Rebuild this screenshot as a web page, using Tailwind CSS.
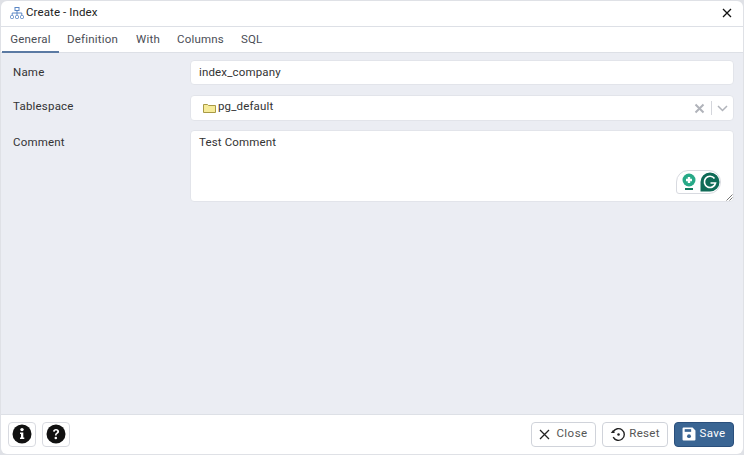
<!DOCTYPE html>
<html lang="en">
<head>
<meta charset="UTF-8" />
<title>Create - Index</title>
<script src="https://cdn.jsdelivr.net/npm/@tailwindcss/browser@4"></script>
</head>
<body class="bg-[#dfe1e6] w-[744px] h-[455px] overflow-hidden font-['Roboto',sans-serif] text-[11.5px] text-[#222]">

<div class="w-[742px] h-[453px] ml-px mt-px flex flex-col bg-white rounded-md overflow-hidden">
  <!-- title bar -->
  <div class="h-[26px] shrink-0 flex items-center pl-[9px] pr-[11px] pb-px border-b border-[#dde0e6]">
    <svg width="14" height="12" viewBox="0 0 14 12" fill="none" stroke="#5b86c4" stroke-width="1" class="mr-[2px]">
      <rect x="5" y="0.5" width="4" height="3" />
      <path d="M7 3.5V6M2.2 8V6H11.8V8M7 6V8" />
      <rect x="0.5" y="8.5" width="3" height="3" rx="1" />
      <rect x="5.500" y="8.500" width="3" height="3" rx="1" />
      <rect x="10.500" y="8.500" width="3" height="3" rx="1" />
    </svg>
    <span class="text-[#222] tracking-[0.1px]">Create - Index</span>
    <svg width="10" height="10" viewBox="0 0 10 10" class="ml-auto" stroke="#111" stroke-width="1.300" fill="none"><path d="M1 1L9 9M9 1L1 9" /></svg>
  </div>

  <!-- tabs -->
  <div class="h-[26px] shrink-0 flex pl-px border-b border-[#dde0e6] text-[#4a4d55] tracking-[0.2px]">
    <div class="w-[57px] text-center leading-[24px] border-b-2 border-[#5b7aa3] h-[26px]">General</div>
    <div class="ml-2 leading-[24px]">Definition</div>
    <div class="ml-[18px] leading-[24px]">With</div>
    <div class="ml-[17px] leading-[24px]">Columns</div>
    <div class="ml-[17px] leading-[24px]">SQL</div>
  </div>

  <!-- form -->
  <div class="flex-1 bg-[#ebedf3] pt-[7px] pl-3 pr-[9px] text-[#333]">
    <div class="flex mb-[10px]">
      <label class="w-[177px] leading-[25px] tracking-[0.2px]">Name</label>
      <div class="flex-1 h-[25px] bg-white rounded border border-[#e2e4ea] px-[8px] leading-[23px] tracking-[0.15px]">index_company</div>
    </div>
    <div class="flex mb-[9px]">
      <label class="w-[177px] leading-[22px] tracking-[0.2px]">Tablespace</label>
      <div class="flex-1 h-[26px] bg-white rounded border border-[#e2e4ea] pl-3 pr-[4px] flex items-center tracking-[0.15px]">
        <svg width="13" height="11" viewBox="0 0 13 11" class="mr-[3px]"><path d="M0.500 9.500V1.500H4.500L5.500 2.500H12.500V9.500Z" fill="#f6eb9a" stroke="#a89a45" stroke-width="1" /></svg>
        <span class="-ml-px -mt-[2px]">pg_default</span>
        <svg width="11" height="11" viewBox="0 0 11 11" class="ml-auto" stroke="#b0b3ba" stroke-width="2" fill="none"><path d="M1.500 1.500L9.500 9.500M9.500 1.500L1.500 9.500" /></svg>
        <span class="w-px h-[14px] bg-[#d4d6dc] ml-[6px] mr-[5px]"></span>
        <svg width="11" height="7" viewBox="0 0 11 7" stroke="#b0b3ba" stroke-width="1.500" fill="none" class="mr-[1px]"><path d="M1 1L5.500 5.500L10 1" /></svg>
      </div>
    </div>
    <div class="flex">
      <label class="w-[177px] leading-[25px] tracking-[0.2px]">Comment</label>
      <div class="relative flex-1 h-[72px] bg-white rounded border border-[#e2e4ea] px-[8px] pt-[3px] tracking-[0.15px]">
        Test Comment
        <div class="absolute right-[12px] bottom-[7px] w-[45px] h-[24px] rounded-[12px] rounded-bl-[3px] bg-white border border-[#d8dae0] flex items-center pl-[5px] gap-[4px]">
          <svg width="14" height="18" viewBox="0 0 14 18">
            <circle cx="7" cy="7" r="6.500" fill="#27a987" />
            <path d="M7 4V10M4 7H10" stroke="#fff" stroke-width="2.400" />
            <rect x="3" y="15" width="8" height="2" fill="#127a5f" />
          </svg>
          <svg width="20" height="20" viewBox="0 0 20 20">
            <path d="M10 0.500A9.500 9.500 0 1 1 10 19.500H0.500V10A9.500 9.500 0 0 1 10 0.500Z" fill="#0f6b57" />
            <path d="M14.500 6.500A5.600 5.600 0 1 0 15.500 11H10.500" fill="none" stroke="#fff" stroke-width="1.700" />
          </svg>
        </div>
        <svg width="7" height="7" viewBox="0 0 7 7" class="absolute right-0 bottom-0" stroke="#777" stroke-width="1" fill="none"><path d="M0.500 6.500L6.500 0.500M3.500 6.500L6.500 3.500" /></svg>
      </div>
    </div>
  </div>

  <!-- footer -->
  <div class="h-[40px] shrink-0 flex items-center pb-px border-t border-[#dde0e6] pl-[7px] pr-[9px] tracking-[0.3px]">
    <button class="w-[28px] h-[25px] flex items-center justify-center rounded border border-[#d8dae0] mr-[6px]">
      <svg width="20" height="20" viewBox="0 0 20 20"><circle cx="10" cy="10" r="9.500" fill="#111" /><circle cx="10" cy="5.600" r="1.700" fill="#fff" /><path d="M8 8.500H11.300V13.500H12.300V15H8V13.500H9V10H8Z" fill="#fff" /></svg>
    </button>
    <button class="w-[28px] h-[25px] flex items-center justify-center rounded border border-[#d8dae0]">
      <svg width="20" height="20" viewBox="0 0 20 20"><circle cx="10" cy="10" r="9.500" fill="#111" /><path d="M7 7.600C7 5.900 8.400 5 10 5C11.800 5 13.100 6 13.100 7.600C13.100 9.800 10.600 9.600 10.600 11.600H9C9 8.800 11.200 9 11.200 7.600C11.200 7 10.700 6.600 10 6.600C9.300 6.600 8.800 7.100 8.800 7.800Z" fill="#fff" /><circle cx="9.800" cy="14" r="1.300" fill="#fff" /></svg>
    </button>
    <button class="ml-auto w-[65px] h-[25px] flex items-center justify-center rounded border border-[#d0d3da] text-[#555] gap-[6px] tracking-[0.45px]">
      <svg width="11" height="11" viewBox="0 0 11 11" stroke="#222" stroke-width="1.300" fill="none"><path d="M1 1L10 10M10 1L1 10" /></svg>
      <span>Close</span>
    </button>
    <button class="ml-[6px] w-[66px] h-[25px] flex items-center justify-center rounded border border-[#d0d3da] text-[#555] gap-[3px]">
      <svg width="16" height="15" viewBox="0 0 15 14" fill="none" stroke="#222" stroke-width="1.300"><path d="M3 4.500A5.500 5.500 0 1 1 3 9.500" /><path d="M0.800 5.500H4.500L3 2.500Z" fill="#222" stroke="none" /><circle cx="8" cy="7" r="1.200" fill="#222" stroke="none" /></svg>
      <span>Reset</span>
    </button>
    <button class="ml-[6px] w-[60px] h-[25px] flex items-center justify-center rounded bg-[#3a6593] border border-[#2a4f7c] text-white gap-[4px] pr-[1px]">
      <svg width="14" height="14" viewBox="0 0 13 13"><path d="M1.500 0.500H9.800L12.500 3.200V11.500A1 1 0 0 1 11.500 12.500H1.500A1 1 0 0 1 0.500 11.500V1.500A1 1 0 0 1 1.500 0.500Z" fill="#fff" /><rect x="2.500" y="2" width="6" height="2.500" fill="#3a6593" /><circle cx="6.500" cy="8.500" r="1.800" fill="#3a6593" /></svg>
      <span>Save</span>
    </button>
  </div>
</div>

</body>
</html>
